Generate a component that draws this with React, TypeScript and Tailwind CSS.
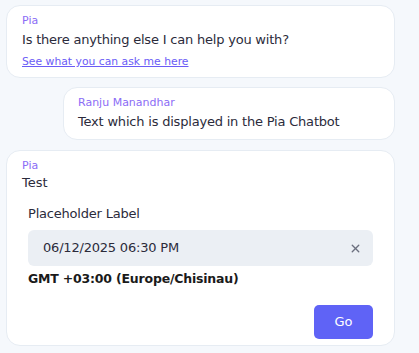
import { X } from "lucide-react";

const font = { fontFamily: '"DejaVu Sans", "Noto Sans", sans-serif' };

const Bubble = ({ className = "", children }: { className?: string; children: React.ReactNode }) => (
  <div className={`rounded-[14px] border border-[#e6ecf3] bg-white ${className}`}>{children}</div>
);

export default function App() {
  return (
    <div className="h-[353px] w-[419px] bg-[#f5f8fc] pt-[5px] text-[#2b2b3b]" style={font}>
      <Bubble className="ml-[6px] mr-[24px] px-[15px] pb-[7px] pt-[8px]">
        <div className="text-[11px] leading-[14px] text-[#8b6cf6]">Pia</div>
        <div className="mt-[3px] text-[13px] leading-[18px] tracking-[-0.2px]">Is there anything else I can help you with?</div>
        <a href="#" className="mt-[5px] block text-[10.8px] leading-[16px] text-[#6b5cf6] underline">
          See what you can ask me here
        </a>
      </Bubble>

      <Bubble className="ml-[63px] mr-[24px] mt-[9px] px-[14px] pb-[8px] pt-[8px]">
        <div className="text-[11px] leading-[14px] text-[#8b6cf6]">Ranju Manandhar</div>
        <div className="mt-[3px] text-[13px] leading-[18px] tracking-[-0.2px]">Text which is displayed in the Pia Chatbot</div>
      </Bubble>

      <Bubble className="ml-[6px] mr-[24px] mt-[10px] pb-[6px] pt-[8px]">
        <div className="px-[15px]">
          <div className="text-[11px] leading-[14px] text-[#8b6cf6]">Pia</div>
          <div className="mt-[1px] text-[13px] leading-[18px]">Test</div>
        </div>
        <div className="px-[21px] pt-[13px]">
          <div className="text-[13px] leading-[18px] tracking-[-0.2px]">Placeholder Label</div>
          <div className="mt-[7px] flex h-[36px] items-center justify-between rounded-[6px] bg-[#ebeff4] pl-[15px] pr-[11px]">
            <span className="text-[13px] tracking-[-0.2px] text-[#2b2b3b]">06/12/2025 06:30 PM</span>
            <X size={13} strokeWidth={2.5} className="text-[#6b6f7e]" />
          </div>
          <div className="mt-[4px] text-[12.5px] font-semibold leading-[18px] tracking-[-0.2px] text-[#1a1a1a]">
            GMT +03:00 (Europe/Chisinau)
          </div>
          <div className="mt-[17px] flex justify-end">
            <button className="h-[34px] w-[59px] rounded-[5px] bg-[#5f63f6] text-[13px] text-white">Go</button>
          </div>
        </div>
      </Bubble>
    </div>
  );
}
